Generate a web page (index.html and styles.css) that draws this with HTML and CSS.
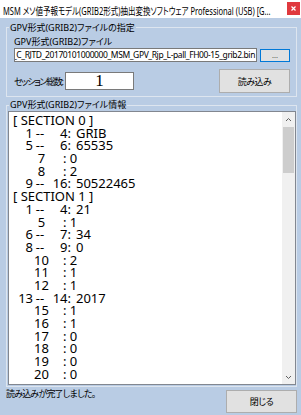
FILE: index.html
```html
<!DOCTYPE html>
<html lang="ja">
<head>
<meta charset="utf-8">
<link rel="stylesheet" href="styles.css">
</head>
<body>
<div class="window">
  <div class="titlebar">
    <div class="title"><span class="title-text">MSM メソ値予報モデル(GRIB2形式)抽出変換ソフトウェア Professional (USB) [G...</span></div>
    <span class="close"><svg width="13" height="13" viewBox="0 0 13 13"><path d="M4.5 4.5 L8.5 8.5 M8.5 4.5 L4.5 8.5" stroke="#fff" stroke-width="1.2" fill="none"/></svg></span>
  </div>
  <div class="client">
    <fieldset class="group g1">
      <legend>GPV形式(GRIB2)ファイルの指定</legend>
      <div class="lbl">GPV形式(GRIB2)ファイル</div>
      <div class="row1">
        <div class="textbox file"><span>Z__C_RJTD_20170101000000_MSM_GPV_Rjp_L-pall_FH00-15_grib2.bin</span></div>
        <button class="btn browse">...</button>
      </div>
      <div class="row2">
        <span class="lbl2">セッション総数:</span>
        <div class="textbox count">1</div>
        <button class="btn load">読み込み</button>
      </div>
    </fieldset>
    <fieldset class="group g2">
      <legend>GPV形式(GRIB2)ファイル情報</legend>
      <div class="textarea">
        <div class="text">
          <div class="ln">[ SECTION 0 ]</div>
          <div class="ln"><i class="a">1</i><i class="d">--</i><i class="b">4:</i>GRIB</div>
          <div class="ln"><i class="a">5</i><i class="d">--</i><i class="b">6:</i>65535</div>
          <div class="ln"><i class="k">7</i>: 0</div>
          <div class="ln"><i class="k">8</i>: 2</div>
          <div class="ln"><i class="a">9</i><i class="d">--</i><i class="b">16:</i>50522465</div>
          <div class="ln">[ SECTION 1 ]</div>
          <div class="ln"><i class="a">1</i><i class="d">--</i><i class="b">4:</i>21</div>
          <div class="ln"><i class="k">5</i>: 1</div>
          <div class="ln"><i class="a">6</i><i class="d">--</i><i class="b">7:</i>34</div>
          <div class="ln"><i class="a">8</i><i class="d">--</i><i class="b">9:</i>0</div>
          <div class="ln"><i class="k">10</i>: 2</div>
          <div class="ln"><i class="k">11</i>: 1</div>
          <div class="ln"><i class="k">12</i>: 1</div>
          <div class="ln"><i class="a">13</i><i class="d">--</i><i class="b">14:</i>2017</div>
          <div class="ln"><i class="k">15</i>: 1</div>
          <div class="ln"><i class="k">16</i>: 1</div>
          <div class="ln"><i class="k">17</i>: 0</div>
          <div class="ln"><i class="k">18</i>: 0</div>
          <div class="ln"><i class="k">19</i>: 0</div>
          <div class="ln"><i class="k">20</i>: 0</div>
        </div>
        <div class="scrollbar">
          <div class="arrow"><svg width="7" height="5" viewBox="0 0 7 5"><path d="M1 4 L3.5 1.5 L6 4" stroke="#606060" stroke-width="1" fill="none"/></svg></div>
          <div class="thumb"></div>
          <div class="track"></div>
          <div class="arrow"><svg width="7" height="5" viewBox="0 0 7 5"><path d="M1 1 L3.5 3.5 L6 1" stroke="#606060" stroke-width="1" fill="none"/></svg></div>
        </div>
      </div>
    </fieldset>
    <div class="footer">
      <span class="status">読み込みが完了しました。</span>
      <button class="btn closebtn">閉じる</button>
    </div>
  </div>
</div>
</body>
</html>
```

FILE: styles.css
```css
html, body {
  margin: 0;
  padding: 0;
}
body {
  width: 301px;
  height: 415px;
  overflow: hidden;
  font-family: "Noto Sans", "Noto Sans CJK JP", sans-serif;
  font-feature-settings: "palt";
  color: #000;
}
.window {
  width: 301px;
  height: 415px;
  display: flex;
  flex-direction: column;
  background: #b9cce4;
}
.titlebar {
  height: 18px;
  flex: none;
  background: #fff;
  display: flex;
  align-items: flex-start;
  padding-left: 3px;
  overflow: hidden;
}
.title {
  flex: 1;
  min-width: 0;
  line-height: 18px;
  white-space: nowrap;
}
.title-text {
  display: inline-block;
  font-size: 10px;
  transform: scaleX(0.75);
  transform-origin: left center;
}
.close {
  flex: none;
  width: 13px;
  height: 13px;
  margin-top: 2px;
  margin-right: 1px;
  background: #e0393e;
  display: flex;
}
.client {
  flex: 1;
  display: flex;
  flex-direction: column;
  padding: 3px 4px 0 6px;
}
.group {
  margin: 0;
  border: 1px solid #dde5ef;
  min-width: 0;
}
legend {
  font-size: 9px;
  line-height: 13px;
  padding: 0 1px;
}
.g1 {
  padding: 2px 6px 3px 7px;
}
.g1 legend {
  margin-left: -5px;
}
.lbl {
  font-size: 9px;
  line-height: 12px;
}
.row1 {
  display: flex;
  align-items: center;
  gap: 3px;
  height: 14px;
}
.textbox {
  box-sizing: border-box;
  background: #fff;
  border: 1px solid #7a7a7a;
}
.file {
  flex: 1;
  min-width: 0;
  height: 14px;
  display: flex;
  justify-content: flex-end;
  overflow: hidden;
  white-space: nowrap;
  font-size: 8.5px;
  line-height: 12px;
  padding: 0 1px;
  letter-spacing: -0.4px;
}
.btn {
  box-sizing: border-box;
  background: #e1e1e1;
  border: 1px solid #adadad;
  padding: 0;
  font-family: "Noto Sans CJK JP", sans-serif;
  font-feature-settings: "palt";
  font-size: 9px;
  color: #000;
}
.browse {
  width: 30px;
  height: 13px;
  border-color: #0078d7;
  font-size: 7px;
  line-height: 9px;
  color: #444;
}
.row2 {
  display: flex;
  align-items: center;
  height: 24px;
  margin-top: 7px;
}
.lbl2 {
  width: 51px;
  font-size: 9px;
  letter-spacing: -1.3px;
  white-space: nowrap;
}
.count {
  width: 69px;
  height: 18px;
  font-family: "Liberation Serif", serif;
  font-size: 17px;
  line-height: 16px;
  text-align: center;
}
.load {
  margin-left: auto;
  width: 71px;
  height: 24px;
  letter-spacing: -0.5px;
}
.g2 {
  margin-top: 2px;
  padding: 0 0 1px 1px;
}
.g2 legend {
  margin-left: 1px;
  line-height: 12px;
}
.textarea {
  height: 274px;
  box-sizing: border-box;
  border: 1px solid #828790;
  background: #fff;
  display: flex;
}
.text {
  flex: 1;
  padding: 2px 0 0 4px;
  font-family: "Noto Sans", sans-serif;
  font-size: 13px;
  line-height: 12.7px;
  overflow: hidden;
}
.ln {
  white-space: pre;
  height: 12.7px;
}
.ln i {
  font-style: normal;
  display: inline-block;
  box-sizing: border-box;
}
.a {
  width: 20px;
  text-align: right;
}
.d {
  width: 14px;
  text-align: center;
}
.b {
  width: 29px;
  padding-right: 5px;
  text-align: right;
}
.k {
  margin-left: 14px;
  width: 36px;
  padding-right: 7px;
  text-align: center;
}
.scrollbar {
  width: 13px;
  background: #f0f0f0;
  display: flex;
  flex-direction: column;
  align-items: center;
}
.arrow {
  height: 14px;
  width: 13px;
  display: flex;
  align-items: center;
  justify-content: center;
}
.thumb {
  width: 11px;
  height: 46px;
  margin-top: 1px;
  background: #cdcdcd;
}
.track {
  flex: 1;
}
.footer {
  flex: 1;
  display: flex;
  align-items: flex-start;
  padding-top: 3px;
}
.status {
  font-family: "Noto Sans CJK JP", sans-serif;
  font-size: 9px;
  line-height: 8px;
  letter-spacing: -0.8px;
}
.closebtn {
  margin-left: auto;
  width: 71px;
  height: 23px;
  letter-spacing: -0.5px;
}
```
